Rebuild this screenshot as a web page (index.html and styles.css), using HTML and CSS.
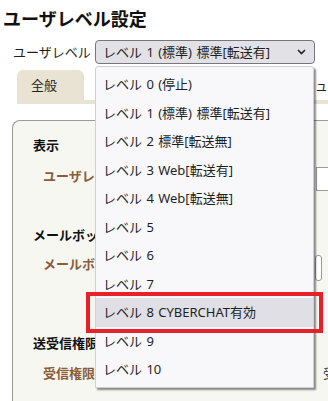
FILE: index.html
```html
<!DOCTYPE html>
<html lang="ja">
<head>
<meta charset="utf-8">
<title>ユーザレベル設定</title>
<link rel="stylesheet" href="styles.css">
</head>
<body>
<div class="page">
  <h1 class="title">ユーザレベル設定</h1>
  <div class="level-row">
    <span class="level-label">ユーザレベル</span>
    <div class="select-wrap">
      <div class="select">
        <span class="select-value">レベル 1 (標準) 標準[転送有]</span>
        <svg class="chev" width="9" height="6" viewBox="0 0 9 6"><path d="M1 1 L4.5 4.5 L8 1" fill="none" stroke="#222" stroke-width="1.6"/></svg>
      </div>
      <ul class="dropdown">
        <li class="opt">レベル 0 (停止)</li>
        <li class="opt">レベル 1 (標準) 標準[転送有]</li>
        <li class="opt">レベル 2 標準[転送無]</li>
        <li class="opt">レベル 3 Web[転送有]</li>
        <li class="opt">レベル 4 Web[転送無]</li>
        <li class="opt">レベル 5</li>
        <li class="opt">レベル 6</li>
        <li class="opt">レベル 7</li>
        <li class="opt hover">レベル 8 CYBERCHAT有効</li>
        <li class="opt">レベル 9</li>
        <li class="opt">レベル 10</li>
      </ul>
      <div class="mark"></div>
    </div>
  </div>
  <div class="tabs">
    <div class="tab active">全般</div>
    <div class="tab">メール</div>
    <div class="tab">送受信</div>
    <div class="tab">セキュリ</div>
  </div>
  <div class="panel">
    <div class="section sec-display">
      <h2 class="sec-title">表示</h2>
      <div class="field">
        <span class="field-label">ユーザレベル表示</span>
        <span class="box wide"></span>
      </div>
    </div>
    <div class="section sec-mail">
      <h2 class="sec-title">メールボックス</h2>
      <div class="field">
        <span class="field-label">メールボックス容量</span>
        <span class="box short"></span>
      </div>
    </div>
    <div class="section sec-perm">
      <h2 class="sec-title">送受信権限</h2>
      <div class="field">
        <span class="field-label">受信権限</span>
        <span class="field-text">受</span>
      </div>
    </div>
  </div>
</div>
</body>
</html>
```
FILE: styles.css
```css
html, body {
  margin: 0;
  padding: 0;
  background: #ffffff;
}
body {
  font-family: "Noto Sans", "Noto Sans CJK JP", sans-serif;
  color: #1f1f1f;
  font-size: 13px;
  overflow: hidden;
  width: 328px;
  height: 401px;
}
.page {
  padding-top: 7px;
  width: 328px;
  height: 401px;
  overflow: hidden;
}
.title {
  margin: 0;
  padding-left: 3px;
  font-size: 18px;
  line-height: 24px;
  font-weight: 700;
  color: #111;
}
.level-row {
  display: flex;
  align-items: center;
  margin-top: 9px;
  padding-left: 13px;
  gap: 5px;
}
.level-label {
  font-size: 13px;
  line-height: 24px;
  width: 77px;
  white-space: nowrap;
}
.select-wrap {
  position: relative;
}
.select {
  box-sizing: border-box;
  width: 220px;
  height: 24px;
  display: flex;
  align-items: center;
  justify-content: space-between;
  padding: 0 8px 0 7px;
  background: #e1e1e6;
  border: 1px solid #76767c;
  border-radius: 4px;
}
.select-value {
  line-height: 20px;
  white-space: nowrap;
  word-spacing: 1px;
}
.chev {
  display: block;
}
.dropdown {
  position: absolute;
  z-index: 5;
  top: 26px;
  left: 0;
  width: 219px;
  box-sizing: border-box;
  margin: 0;
  padding: 3px 0 3px;
  list-style: none;
  background: #f8f8fb;
  border: 1px solid #cfcfd6;
  border-radius: 3px 3px 0 0;
  box-shadow: 2px 2px 2px rgba(0, 0, 0, 0.45);
}
.opt {
  height: 28.5px;
  line-height: 28.5px;
  padding-left: 7px;
  white-space: nowrap;
  word-spacing: 1px;
  color: #1f1f1f;
}
.opt.hover {
  background: #dfdfe5;
}
.mark {
  position: absolute;
  z-index: 6;
  left: -9px;
  top: 252px;
  width: 237px;
  height: 41px;
  box-sizing: border-box;
  border: 4px solid #e8202a;
}
.tabs {
  display: flex;
  gap: 19px;
  margin-top: 6px;
  margin-left: 17px;
  border-bottom: 4px solid #e9e3d3;
  height: 30px;
  overflow: hidden;
}
.tab {
  flex: none;
  min-width: 67px;
  box-sizing: border-box;
  padding-left: 14px;
  line-height: 30px;
  white-space: nowrap;
  border-radius: 6px 6px 0 0;
  color: #222;
}
.tab.active {
  background: #e9e3d3;
}
.panel {
  margin-top: 16px;
  margin-left: 12px;
  height: 281px;
  box-sizing: border-box;
  background: #f7f7f2;
  border: 1px solid #9a9a9a;
  border-right: none;
  border-bottom: none;
  border-radius: 8px 0 0 0;
  padding-top: 14px;
  overflow: hidden;
}
.section {
  padding-left: 20px;
}
.sec-title {
  margin: 0;
  font-size: 13px;
  line-height: 20px;
  font-weight: 700;
  color: #111;
  white-space: nowrap;
}
.field {
  display: grid;
  grid-template-columns: 273px auto;
  align-items: start;
  padding-left: 10px;
}
.field-label {
  font-weight: 700;
  color: #8a5d3b;
  line-height: 18px;
  white-space: nowrap;
}
.field-text {
  line-height: 18px;
  padding-left: 7px;
  white-space: nowrap;
  color: #333;
}
.box {
  display: block;
  box-sizing: border-box;
  background: #ffffff;
  border: 1px solid #9a9a9a;
  border-radius: 3px;
}
.box.wide {
  width: 12px;
  height: 24px;
  border-right: none;
  border-radius: 0;
}
.box.short {
  width: 7px;
  height: 26px;
  margin-left: -1px;
}
.sec-display .field {
  margin-top: 12px;
}
.sec-mail {
  margin-top: 34px;
}
.sec-mail .field {
  margin-top: 10px;
}
.sec-perm {
  margin-top: 52px;
}
.sec-perm .field {
  margin-top: 11px;
}
```
